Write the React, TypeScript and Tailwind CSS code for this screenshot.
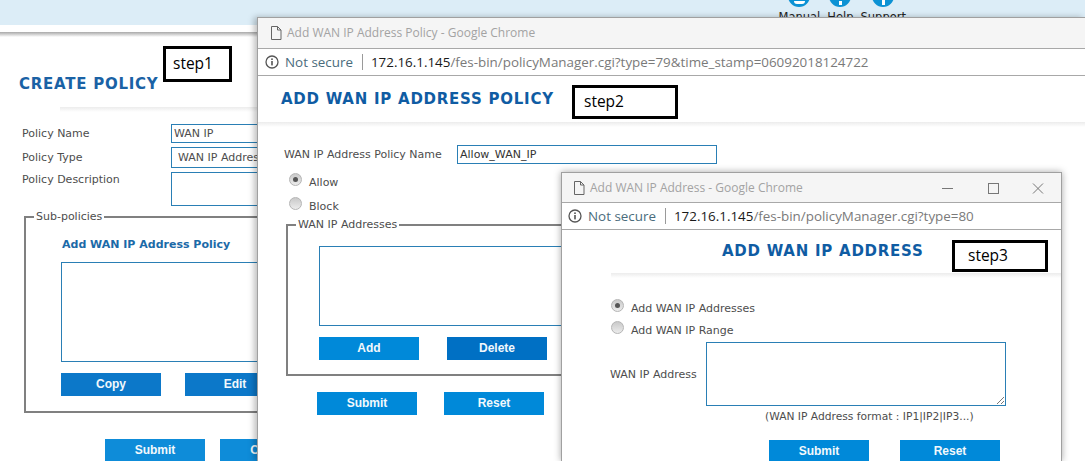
import React from "react";

const titleFont = "font-['DejaVu_Sans',sans-serif]";

const Btn = ({ label, className = "bg-[#0089d9]" }: { label: string; className?: string }) => (
  <button
    type="button"
    className={`h-[23px] w-[100px] shrink-0 pb-[1px] text-center font-['Liberation_Sans',sans-serif] text-[12px] font-bold text-[#f2f8fc] ${className}`}
  >
    {label}
  </button>
);

const Radio = ({ checked = false }: { checked?: boolean }) => (
  <span className="flex h-[13px] w-[13px] shrink-0 items-center justify-center rounded-full border border-[#b5b5b5] bg-gradient-to-b from-[#c9c9c9] to-[#ececec]">
    {checked && <span className="h-[5px] w-[5px] rounded-full bg-[#555]" />}
  </span>
);

const RadioRow = ({ label, checked, className }: { label: string; checked?: boolean; className: string }) => (
  <div className={`flex items-start gap-[7px] ${className}`}>
    <Radio checked={checked} />
    <span className="pt-[3px] leading-[14px]">{label}</span>
  </div>
);

const FileIcon = () => (
  <svg width="14" height="16" viewBox="0 0 14 16" fill="none" stroke="#666" strokeWidth="1" className="shrink-0">
    <path d="M2.5 1.5h6l3.5 3.5v9.5h-9.5z M8.5 1.5v3.5h3.5" />
  </svg>
);

const InfoIcon = () => (
  <svg width="14" height="14" viewBox="0 0 14 14" fill="none" className="shrink-0">
    <circle cx="7" cy="7" r="6" stroke="#555" strokeWidth="1.3" />
    <rect x="6.2" y="6" width="1.6" height="4.4" fill="#555" />
    <rect x="6.2" y="3.4" width="1.6" height="1.6" fill="#555" />
  </svg>
);

const TitleBar = ({ title, controls = false, className }: { title: string; controls?: boolean; className: string }) => (
  <div className={`flex items-center border-b border-[#a8a8a8] bg-[#f5f5f5] font-['Open_Sans',sans-serif] text-[12px] text-[#a3a3a3] ${className}`}>
    <FileIcon />
    <span className="ml-[4px]">{title}</span>
    {controls && (
      <div className="ml-auto flex items-center">
        <svg width="102" height="14" viewBox="0 0 102 14" fill="none" stroke="#777" strokeWidth="1" className="mr-[17px]">
          <path d="M0 7.5h11" />
          <rect x="46.5" y="2.5" width="10" height="10" />
          <path d="M91 2.5l10 10M101 2.5l-10 10" />
        </svg>
      </div>
    )}
  </div>
);

const AddressBar = ({ host, path, className }: { host: string; path: string; className: string }) => (
  <div className={`flex h-[27px] items-center border-b border-[#a8a8a8] bg-white font-['Open_Sans',sans-serif] text-[13.4px] whitespace-nowrap ${className}`}>
    <InfoIcon />
    <span className="ml-[6px] text-[#4a6c7c]">Not secure</span>
    <span className="ml-[9px] h-[16px] w-px bg-[#9a9a9a]" />
    <span className="ml-[8px] text-[#1a1a1a]">{host}</span>
    <span className="text-[#7a7a7a]">{path}</span>
  </div>
);

const Divider = ({ className = "" }: { className?: string }) => (
  <div className={`h-[5px] bg-gradient-to-b from-[#ececec] to-white ${className}`} />
);

const StepBox = ({ label, className }: { label: string; className: string }) => (
  <div className={`absolute z-30 flex items-center border-[3px] border-black bg-white font-['Open_Sans',sans-serif] text-[15.5px] text-black ${className}`}>
    {label}
  </div>
);

const TopLink = ({ label, glyph }: { label: string; glyph: React.ReactNode }) => (
  <div className="flex flex-col items-center">
    <span className="relative flex h-[22px] w-[22px] items-end justify-center rounded-full bg-[#0c92d4]">{glyph}</span>
    <span className="mt-[4px] font-['DejaVu_Sans',sans-serif] text-[11.5px] leading-[12px] text-[#222]">{label}</span>
  </div>
);

const App = () => {
  return (
    <div className={`relative h-[461px] w-[1085px] overflow-hidden bg-white ${titleFont} text-[11px] text-[#4d4d4d]`}>
      {/* page behind the popups */}
      <div className="flex h-[25px] justify-end overflow-visible bg-[#dcedf7] pr-[179px]">
        <div className="-mt-[15px] flex h-[40px] gap-[7px]">
          <TopLink label="Manual" glyph={<span className="mb-[3px] h-[3px] w-[11px] rounded-b bg-white" />} />
          <TopLink label="Help" glyph={<span className="mb-[2px] h-[4px] w-[3px] bg-white" />} />
          <TopLink label="Support" glyph={<span className="mb-[2px] h-[5px] w-[3px] bg-white" />} />
        </div>
      </div>
      <div className="mt-[7px] h-[5px] bg-gradient-to-b from-[#a9a9a9] to-white" />

      <h1 className="ml-[19px] mt-[38px] text-[15px] leading-[18px] font-bold tracking-[0.75px] text-[#1a62a5]">CREATE POLICY</h1>
      <Divider className="ml-[60px] mt-[14px] w-[300px]" />

      <div className="ml-[22px] mt-[12px] flex items-center">
        <span className="w-[149px] pt-[2px]">Policy Name</span>
        <div className="flex h-[19px] w-[300px] items-center border border-[#2a7fb5] pl-[2px] pt-[1px]">WAN IP</div>
      </div>
      <div className="ml-[22px] mt-[4px] flex items-center">
        <span className="w-[149px] pt-[2px]">Policy Type</span>
        <div className="flex h-[21px] w-[300px] items-center border border-[#2a7fb5] pl-[6px] pt-[1px]">WAN IP Address</div>
      </div>
      <div className="ml-[22px] mt-[4px] flex items-start">
        <span className="w-[149px]">Policy Description</span>
        <div className="h-[34px] w-[300px] border border-[#2a7fb5]" />
      </div>

      <fieldset className="ml-[24px] mt-[4px] h-[203px] w-[400px] border-2 border-[#808080] pl-[35px]">
        <legend className="-ml-[27px] px-[2px] text-[11px] leading-[14px]">Sub-policies</legend>
        <div className="ml-[1px] mt-[14px] text-[11px] leading-[14px] font-bold text-[#1b6aa8]">Add WAN IP Address Policy</div>
        <div className="mt-[10px] h-[100px] w-[300px] border border-[#2a7fb5]" />
        <div className="mt-[11px] flex gap-[24px]">
          <Btn label="Copy" className="bg-[#0c78c9]" />
          <Btn label="Edit" className="bg-[#0c78c9]" />
        </div>
      </fieldset>

      <div className="ml-[105px] mt-[26px] flex gap-[15px]">
        <Btn label="Submit" className="bg-[#0e8cd9]" />
        <Btn label="Cancel" className="bg-[#0e8cd9]" />
      </div>

      {/* first popup */}
      <div className="absolute left-[257px] top-[17px] z-10 h-[444px] w-[828px] border-l border-t border-[#a0a0a0] bg-white shadow-[-3px_0_6px_rgba(0,0,0,0.25)]">
        <TitleBar title="Add WAN IP Address Policy - Google Chrome" className="h-[31px] pl-[11px]" />
        <AddressBar host="172.16.1.145" path="/fes-bin/policyManager.cgi?type=79&time_stamp=06092018124722" className="pl-[7px]" />
        <h2 className="ml-[23px] mt-[14px] text-[15px] leading-[18px] font-bold tracking-[0.75px] text-[#0f5ca3]">ADD WAN IP ADDRESS POLICY</h2>
        <Divider className="mt-[14px]" />
        <div className="ml-[26px] mt-[18px] flex items-center">
          <span className="w-[173px] pt-[2px]">WAN IP Address Policy Name</span>
          <div className="flex h-[19px] w-[260px] items-center border border-[#2a7fb5] pl-[2px] pt-[1px] text-[#333]">Allow_WAN_IP</div>
        </div>
        <RadioRow label="Allow" checked className="ml-[31px] mt-[9px]" />
        <RadioRow label="Block" className="ml-[31px] mt-[7px]" />
        <fieldset className="ml-[28px] mt-[4px] h-[158px] w-[500px] border-2 border-[#808080] pl-[31px]">
          <legend className="-ml-[23px] px-[2px] text-[11px] leading-[14px]">WAN IP Addresses</legend>
          <div className="mt-[14px] h-[80px] w-[300px] border border-[#2a7fb5]" />
          <div className="mt-[11px] flex gap-[28px]">
            <Btn label="Add" />
            <Btn label="Delete" className="bg-[#0070c4]" />
          </div>
        </fieldset>
        <div className="ml-[59px] mt-[16px] flex gap-[27px]">
          <Btn label="Submit" />
          <Btn label="Reset" />
        </div>
      </div>

      {/* second popup */}
      <div className="absolute left-[561px] top-[172px] z-20 h-[289px] w-[501px] border-x border-t border-[#a0a0a0] bg-white shadow-[0_0_7px_rgba(0,0,0,0.35)]">
        <TitleBar title="Add WAN IP Address - Google Chrome" controls className="h-[30px] pl-[10px]" />
        <AddressBar host="172.16.1.145" path="/fes-bin/policyManager.cgi?type=80" className="pl-[6px]" />
        <h2 className="ml-[160px] mt-[12px] text-[15px] leading-[18px] font-bold tracking-[0.75px] text-[#0f5ca3]">ADD WAN IP ADDRESS</h2>
        <Divider className="ml-[49px] mt-[13px]" />
        <RadioRow label="Add WAN IP Addresses" checked className="ml-[49px] mt-[21px]" />
        <RadioRow label="Add WAN IP Range" className="ml-[49px] mt-[5px]" />
        <div className="ml-[48px] mt-[4px] flex items-center">
          <span className="w-[96px] pt-[2px]">WAN IP Address</span>
          <div className="relative h-[64px] w-[300px] border border-[#2a7fb5]">
            <svg width="9" height="9" viewBox="0 0 9 9" stroke="#777" className="absolute bottom-0 right-0">
              <path d="M1 8l7-7M5 8l3-3" />
            </svg>
          </div>
        </div>
        <div className="ml-[203px] mt-[4px] text-[10.7px] leading-[14px] whitespace-nowrap">(WAN IP Address format : IP1|IP2|IP3...)</div>
        <div className="ml-[207px] mt-[16px] flex gap-[31px]">
          <Btn label="Submit" />
          <Btn label="Reset" />
        </div>
      </div>

      <StepBox label="step1" className="left-[163px] top-[46px] h-[36px] w-[69px] pl-[7px]" />
      <StepBox label="step2" className="left-[572px] top-[85px] h-[34px] w-[106px] pl-[9px]" />
      <StepBox label="step3" className="left-[952px] top-[240px] h-[32px] w-[96px] pl-[13px]" />
    </div>
  );
};

export default App;
